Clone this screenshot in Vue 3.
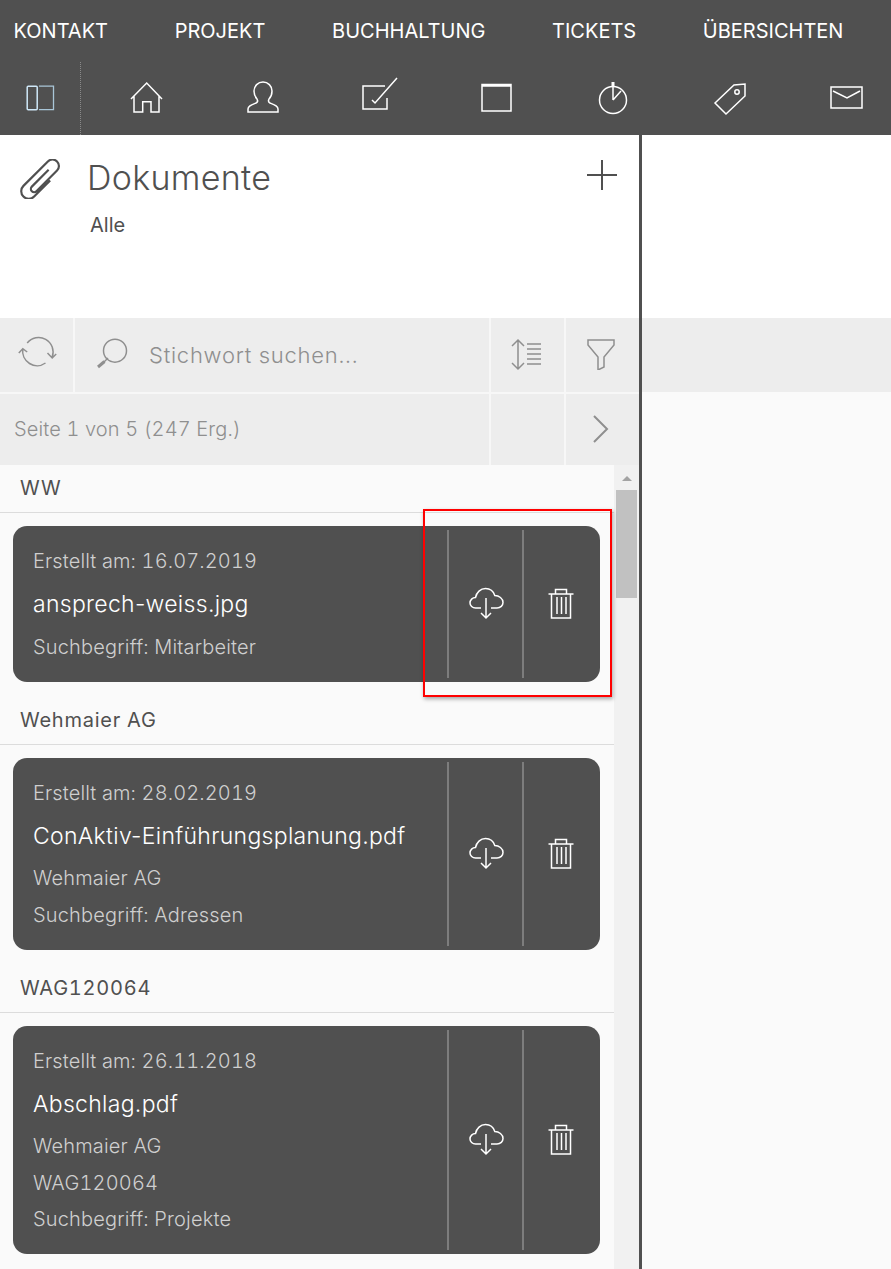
<script setup>
const tabs = ['KONTAKT', 'PROJEKT', 'BUCHHALTUNG', 'TICKETS', 'ÜBERSICHTEN']

const groups = [
  { name: 'WW', created: '16.07.2019', file: 'ansprech-weiss.jpg', lines: ['Suchbegriff: Mitarbeiter'] },
  { name: 'Wehmaier AG', created: '28.02.2019', file: 'ConAktiv-Einführungsplanung.pdf', lines: ['Wehmaier AG', 'Suchbegriff: Adressen'] },
  { name: 'WAG120064', created: '26.11.2018', file: 'Abschlag.pdf', lines: ['Wehmaier AG', 'WAG120064', 'Suchbegriff: Projekte'] }
]
</script>

<template>
  <div class="page">
    <header class="nav">
      <div class="tabs">
        <span v-for="tab in tabs" :key="tab" class="tab">{{ tab }}</span>
      </div>
      <div class="icons">
        <div class="panel-toggle">
          <svg width="30" height="28" viewBox="0 0 30 28" fill="none">
            <rect x="2.200" y="2.200" width="10" height="23.500" rx="1" stroke="#cfe8f8" stroke-width="1.500" />
            <path d="M14 2.200H28.500V25.700H14" stroke="#a9c6d8" stroke-width="1.300" />
          </svg>
        </div>
        <div class="icon-list">
          <svg class="nav-icon" viewBox="0 0 40 40"><path d="M5 21L20.700 5L36 21M8 18V34H16.700V23.700H25V34H33V18" /></svg>
          <svg class="nav-icon" viewBox="0 0 40 40"><path d="M5 34v-3c0-3 3-4 8-6c2-1 2-2 1-4c-2-2-3-5-3-8c0-5 4-9 9-9s9 4 9 9c0 3-1 6-3 8c-1 2-1 3 1 4c5 2 8 3 8 6v3z" /></svg>
          <svg class="nav-icon" viewBox="0 0 40 40"><path d="M25 8H3V31H27V20M12 22L15 25L37 0" /></svg>
          <svg class="nav-icon" viewBox="0 0 40 40"><path d="M6 6.500H35V33H6ZM6 8H35" /></svg>
          <svg class="nav-icon" viewBox="0 0 40 40"><circle cx="20" cy="22" r="13.500" /><path d="M20 22V5M20 22L28 13" /><path d="M20 4V8" stroke-width="3" /></svg>
          <svg class="nav-icon" viewBox="0 0 40 40"><path d="M5 25L24 7L35 6V18L16 36Z" /><circle cx="27" cy="14" r="2.200" /></svg>
          <svg class="nav-icon" viewBox="0 0 40 40"><path d="M4 9H35V30H4ZM6 13L20 20L33 13" /></svg>
        </div>
      </div>
    </header>

    <div class="main">
      <section class="left">
        <div class="title-area">
          <svg class="clip" width="44" height="40" viewBox="0 0 44 40" fill="none">
            <g transform="translate(22 20) rotate(45) scale(1.080)">
              <path d="M7-5V16A7 7 0 0 1-7 16V-16A6 6 0 0 1 5-16V11A3 3 0 0 1-1 11V-11" />
            </g>
          </svg>
          <div class="title-text">
            <h1 class="title">Dokumente</h1>
            <div class="subtitle">Alle</div>
          </div>
          <svg class="plus" width="30" height="30" viewBox="0 0 30 30"><path d="M15 0V30M0 15H30" /></svg>
        </div>

        <div class="toolbar">
          <div class="tool tool-refresh">
            <svg width="40" height="40" viewBox="0 0 40 40" fill="none">
              <path d="M10.200 8A14.500 14.500 0 0 1 35.200 22M30.500 18L35.200 23L39.200 19" />
              <path d="M28.500 28A14.500 14.500 0 0 1 5.800 14M1.800 18L5.800 13.700L10.200 17" />
            </svg>
          </div>
          <div class="search">
            <svg width="36" height="36" viewBox="0 0 36 36" fill="none">
              <circle cx="22" cy="13.700" r="11.500" />
              <path d="M15 21L11 25" />
              <path d="M11.500 24.500L5 30" stroke-width="3" />
            </svg>
            <span class="placeholder">Stichwort suchen...</span>
          </div>
          <div class="tool tool-raised">
            <svg width="34" height="34" viewBox="0 0 34 34" fill="none">
              <path d="M7 3V32M1 9L7 3L13 9M1 26L7 32L13 26" />
              <path d="M16 7H30M16 12H30M16 17H30M16 22H30M16 27H30" />
            </svg>
          </div>
          <div class="tool tool-last tool-raised">
            <svg width="30" height="32" viewBox="0 0 30 32" fill="none">
              <path d="M2 2H28V7L18 19V29L12 32V19L2 7Z" />
            </svg>
          </div>
        </div>

        <div class="pager">
          <div class="pager-text">Seite 1 von 5 (247 Erg.)</div>
          <div class="tool"></div>
          <div class="tool tool-last tool-next">
            <svg width="20" height="30" viewBox="0 0 20 30" fill="none"><path d="M3 2L16 15L3 28" stroke-width="2" /></svg>
          </div>
        </div>

        <div class="list-wrap">
          <div class="list">
            <div v-for="group in groups" :key="group.name" class="group">
              <div class="group-head">{{ group.name }}</div>
              <article class="card">
                <div class="card-text">
                  <div class="created">Erstellt am: {{ group.created }}</div>
                  <div class="file">{{ group.file }}</div>
                  <div v-for="line in group.lines" :key="line" class="meta">{{ line }}</div>
                </div>
                <div class="card-action">
                  <svg width="36" height="34" viewBox="0 0 36 34" fill="none">
                    <path d="M13 21H7.500C4.500 21 2 18.800 2 16C2 13 4.500 10.500 7.500 10.500C8.500 5.500 12.500 1.500 17.500 1.500C22 1.500 25.500 4.500 26.800 8.500C31 8.500 35 11.500 35 15.500C35 18.500 32.500 21 29 21H23" />
                    <path d="M18 11V31M13 26L18 31L23 26" />
                  </svg>
                </div>
                <div class="card-action">
                  <svg width="28" height="34" viewBox="0 0 28 34" fill="none">
                    <path d="M1.500 7H26.500M8.500 7V2.500H19.500V7M4.500 7V31H23.500V7" />
                    <path d="M10 10V27M14.500 10V27M19 10V27" />
                  </svg>
                </div>
              </article>
            </div>
          </div>
          <div class="scrollbar">
            <div class="scroll-up"></div>
            <div class="scroll-thumb"></div>
          </div>
        </div>
      </section>

      <section class="right">
        <div class="right-band"></div>
      </section>
    </div>

    <div class="highlight"></div>
  </div>
</template>

<style>
html, body { margin: 0; background: #fff; }
</style>

<style scoped>
.page { position: relative; width: 891px; height: 1269px; overflow: hidden; background: #fff; font-family: Inter, "Noto Sans", sans-serif; color: #505050; font-variant-numeric: tabular-nums; }

.nav { height: 135px; background: #505050; }
.tabs { display: flex; gap: 66.7px; height: 62px; padding-left: 13.5px; align-items: center; }
.tab { color: #fff; font-size: 20px; font-weight: 400; }
.icons { display: flex; height: 73px; }
.panel-toggle { width: 81px; height: 73px; box-sizing: border-box; border-right: 1px dotted #8a8a8a; padding: 22px 0 0 25px; }
.icon-list { display: flex; padding-left: 45px; gap: 76.83px; padding-top: 16px; }
.nav-icon { display: block; width: 40px; height: 40px; overflow: visible; fill: none; stroke: #fff; stroke-width: 1.5; }

.main { display: flex; height: 1134px; }
.left { width: 639px; border-right: 3px solid #505050; }
.right { flex: 1; background: #fafafa; }
.right-band { height: 183px; background: #fff; border-bottom: 74px solid #ededed; }

.title-area { display: flex; height: 183px; background: #fff; position: relative; }
.clip { margin: 24px 0 0 19px; stroke: #505050; stroke-width: 2; }
.title-text { margin-left: 24px; }
.title { margin: 21px 0 0; font-size: 34px; line-height: 44px; font-weight: 300; color: #505050; letter-spacing: 0.3px; }
.subtitle { margin: 13px 0 0 3px; font-size: 20px; line-height: 24px; font-weight: 400; color: #505050; }
.plus { position: absolute; left: 587px; top: 25px; stroke: #505050; stroke-width: 2; }

.toolbar { display: flex; height: 76px; background: #ededed; border-bottom: 2px solid #f7f7f7; box-sizing: border-box; }
.tool { width: 75px; flex: none; display: flex; align-items: center; justify-content: center; border-left: 2px solid #f7f7f7; box-sizing: border-box; }
.tool svg, .search svg { stroke: #8f8f8f; stroke-width: 1.5; }
.tool-refresh { width: 75px; border-left: 0; border-right: 2px solid #f7f7f7; }
.tool-last { padding-right: 3px; }
.tool-raised { padding-bottom: 3px; }
.tool-next { padding-bottom: 2px; }
.search { flex: 1; display: flex; align-items: center; padding-left: 18px; gap: 20px; }
.placeholder { color: #8f8f8f; font-size: 22px; font-weight: 300; letter-spacing: 0.75px; }
.pager { display: flex; height: 71px; background: #ededed; }
.pager-text { flex: 1; display: flex; align-items: center; padding: 0 0 2px 14px; color: #8f8f8f; font-size: 20px; font-weight: 300; letter-spacing: 0.12px; }

.list-wrap { display: flex; height: 804px; }
.list { width: 614px; background: #fafafa; }
.group-head { height: 48px; box-sizing: border-box; padding-top: 10px; padding-left: 20px; border-bottom: 1px solid #dcdcdc; font-size: 20px; line-height: 26px; color: #505050; letter-spacing: 0.75px; }
.card { display: flex; margin: 13px 14px 15px 13px; background: #505050; border-radius: 14px; padding: 4px 3px 4px 0; }
.card-text { flex: 1; padding: 20px 0 20px 20px; }
.created { font-size: 20px; line-height: 22px; color: #cfcfcf; font-weight: 300; letter-spacing: 0.12px; }
.file { margin-top: 19px; font-size: 23px; line-height: 26px; color: #fff; font-weight: 300; letter-spacing: 0.3px; font-variant-numeric: normal; }
.meta { margin-top: 14.5px; font-size: 20px; line-height: 22px; color: #cfcfcf; font-weight: 300; letter-spacing: 0.17px; }
.file + .meta { margin-top: 18.5px; }
.card-action { width: 75px; flex: none; display: flex; align-items: center; justify-content: center; border-left: 2px solid #7d7d7d; box-sizing: border-box; }
.card-action svg { stroke: #fff; stroke-width: 1.5; }

.scrollbar { width: 25px; background: #f1f1f1; }
.scroll-up { width: 0; height: 0; margin: 11px auto 0; border-left: 5px solid transparent; border-right: 5px solid transparent; border-bottom: 5px solid #a3a3a3; }
.scroll-thumb { width: 21px; height: 108px; margin: 9px 0 0 2px; background: #c1c1c1; }

.highlight { position: absolute; left: 423px; top: 509px; width: 189px; height: 188px; box-sizing: border-box; border: 2px solid #f00; box-shadow: 1px 2px 4px rgba(0, 0, 0, 0.35); }
</style>
